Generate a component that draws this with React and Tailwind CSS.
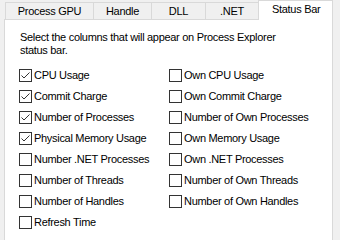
import React from "react";

const left = [
  ["CPU Usage", true],
  ["Commit Charge", true],
  ["Number of Processes", true],
  ["Physical Memory Usage", true],
  ["Number .NET Processes", false],
  ["Number of Threads", false],
  ["Number of Handles", false],
  ["Refresh Time", false],
];
const right = [
  "Own CPU Usage",
  "Own Commit Charge",
  "Number of Own Processes",
  "Own Memory Usage",
  "Own .NET Processes",
  "Number of Own Threads",
  "Number of Own Handles",
];

function Box({ checked, label }) {
  return (
    <div className="flex h-[21px] items-center">
      <div className="w-[13px] h-[13px] border border-[#333333] bg-white flex items-center justify-center shrink-0">
        {checked && (
          <svg width="11" height="11" viewBox="0 0 11 11">
            <path d="M1.5 5.5 L4 8 L9.5 2.5" fill="none" stroke="#333333" strokeWidth="1" />
          </svg>
        )}
      </div>
      <span className="ml-[2px] text-black whitespace-nowrap">{label}</span>
    </div>
  );
}

function Tab({ label, w }) {
  return (
    <div
      className={`h-[17px] border-t border-l border-[#d9d9d9] bg-[#f0f0f0] flex items-center justify-center ${w}`}
    >
      <span>{label}</span>
    </div>
  );
}

export default function App() {
  return (
    <div
      className="w-[340px] h-[240px] bg-[#f0f0f0] overflow-hidden text-[11px] leading-[13px] tracking-[-0.3px] text-black"
      style={{ fontFamily: '"Liberation Sans", Arial, sans-serif' }}
    >
      <div className="flex items-end h-[19px] pl-[5px]">
        <Tab label="Process GPU" w="w-[88px]" />
        <Tab label="Handle" w="w-[58px]" />
        <Tab label="DLL" w="w-[54px]" />
        <Tab label=".NET" w="w-[53px]" />
        <div className="relative z-10 h-[20px] -mb-[1px] w-[75px] bg-white border-t border-l border-r border-[#d9d9d9] flex items-start pt-[2px] pl-[13px]">
          <span>Status Bar</span>
        </div>
      </div>
      <div className="ml-[4px] w-[329px] h-[240px] bg-white border border-[#d9d9d9] pl-[15px] pt-[11px]">
        <p className="w-[270px]">
          Select the columns that will appear on Process Explorer status bar.
        </p>
        <div className="flex mt-[8px] -ml-[1px]">
          <div className="w-[150px] flex flex-col">
            {left.map(([l, c]) => (
              <Box key={l} label={l} checked={c} />
            ))}
          </div>
          <div className="flex flex-col">
            {right.map((l) => (
              <Box key={l} label={l} checked={false} />
            ))}
          </div>
        </div>
      </div>
    </div>
  );
}
